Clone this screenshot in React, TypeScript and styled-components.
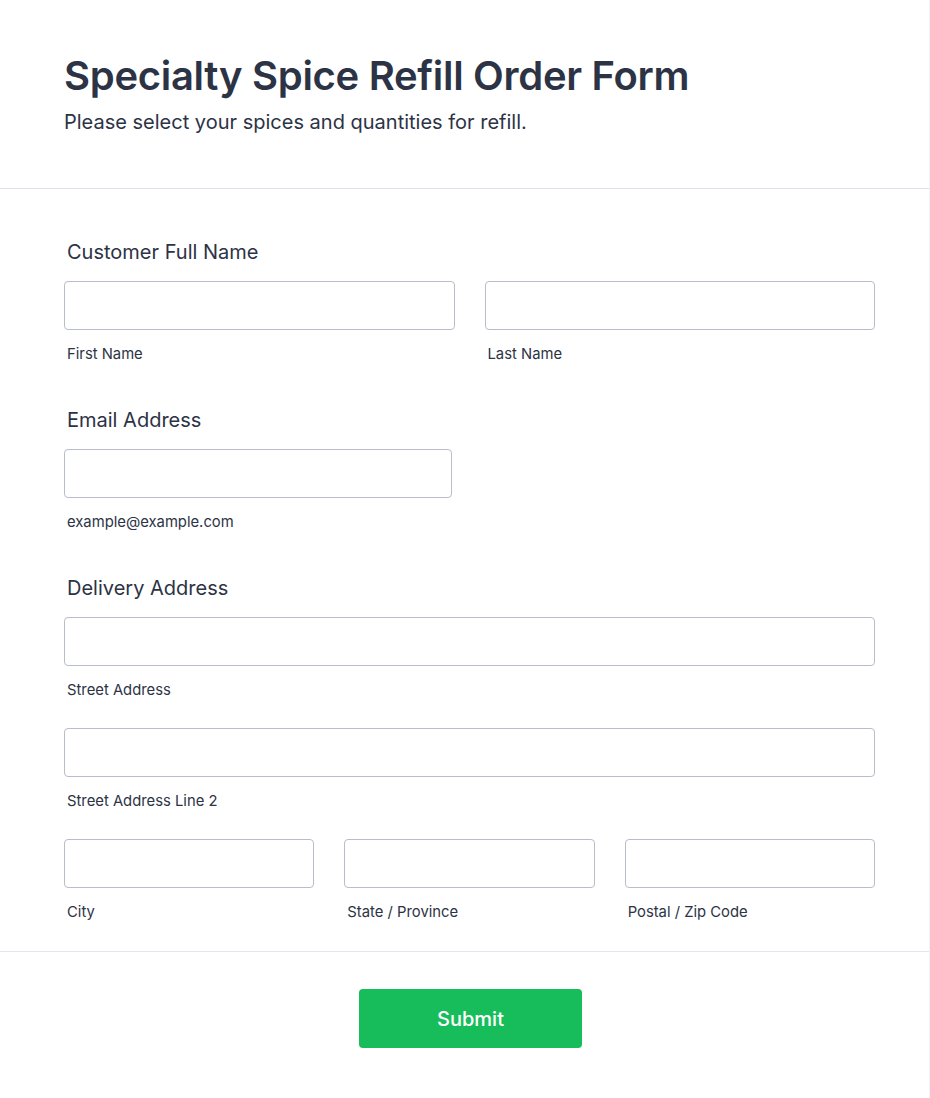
import React from "react";
import styled, { createGlobalStyle } from "styled-components";

const Global = createGlobalStyle`
  html, body { margin: 0; padding: 0; background: #ffffff; }
  body { font-family: Inter, "Noto Sans", sans-serif; color: #2c3345; }
  * { box-sizing: border-box; }
`;

const Card = styled.div`
  width: 930px;
  min-height: 1098px;
  background: #ffffff;
  border-right: 1px solid #f1f2f8;
  display: flex;
  flex-direction: column;
`;

const Header = styled.header`
  height: 189px;
  padding: 52px 64px 0;
  border-bottom: 1px solid #dde2ea;
`;

const Title = styled.h1`
  margin: 0;
  font-size: 40px;
  line-height: 48px;
  font-weight: 600;
  letter-spacing: -0.3px;
  color: #2c3345;
`;

const Subtitle = styled.p`
  margin: 10px 0 0;
  font-size: 20px;
  line-height: 24px;
  font-weight: 400;
  color: #2c3345;
`;

const FormBody = styled.div`
  padding: 51px 54px 30px 64px;
  border-bottom: 1px solid #e3e6ee;
  display: flex;
  flex-direction: column;
  gap: 45px;
`;

const Group = styled.section`
  display: flex;
  flex-direction: column;
`;

const GroupLabel = styled.label`
  display: block;
  margin: 0 0 18px 3px;
  padding-top: 1px;
  font-size: 20px;
  line-height: 22px;
  font-weight: 400;
  color: #2c3345;
`;

const Rows = styled.div`
  display: flex;
  flex-direction: column;
  gap: 29px;
`;

const Row = styled.div<{ $cols: number; $width?: number }>`
  display: grid;
  grid-template-columns: repeat(${(p) => p.$cols}, 1fr);
  column-gap: 30px;
  width: ${(p) => (p.$width ? `${p.$width}px` : "100%")};
`;

const Field = styled.div`
  display: flex;
  flex-direction: column;
`;

const Input = styled.input`
  height: 49px;
  width: 100%;
  border: 1px solid #b8bdc9;
  border-radius: 4px;
  background: #ffffff;
  padding: 0 12px;
  font-family: Inter, sans-serif;
  font-size: 16px;
  color: #2c3345;
  outline: none;
`;

const SubLabel = styled.span`
  margin: 15px 0 0 3px;
  font-size: 14.8px;
  line-height: 18px;
  color: #2c3345;
`;

const Footer = styled.div`
  display: flex;
  justify-content: center;
  padding: 37px 0 50px 12px;
`;

const SubmitButton = styled.button`
  width: 223px;
  height: 59px;
  border: none;
  border-radius: 4px;
  background: #18bd5b;
  color: #ffffff;
  font-family: Inter, sans-serif;
  font-size: 20px;
  font-weight: 500;
  cursor: pointer;
`;

type F = { sub: string };

const FieldBox = ({ sub }: F) => (
  <Field>
    <Input type="text" aria-label={sub} />
    <SubLabel>{sub}</SubLabel>
  </Field>
);

export default function App() {
  return (
    <>
      <Global />
      <Card>
        <Header>
          <Title>Specialty Spice Refill Order Form</Title>
          <Subtitle>Please select your spices and quantities for refill.</Subtitle>
        </Header>
        <FormBody>
          <Group>
            <GroupLabel>Customer Full Name</GroupLabel>
            <Row $cols={2}>
              <FieldBox sub="First Name" />
              <FieldBox sub="Last Name" />
            </Row>
          </Group>
          <Group>
            <GroupLabel>Email Address</GroupLabel>
            <Row $cols={1} $width={388}>
              <FieldBox sub="example@example.com" />
            </Row>
          </Group>
          <Group>
            <GroupLabel>Delivery Address</GroupLabel>
            <Rows>
              <Row $cols={1}>
                <FieldBox sub="Street Address" />
              </Row>
              <Row $cols={1}>
                <FieldBox sub="Street Address Line 2" />
              </Row>
              <Row $cols={3}>
                <FieldBox sub="City" />
                <FieldBox sub="State / Province" />
                <FieldBox sub="Postal / Zip Code" />
              </Row>
            </Rows>
          </Group>
        </FormBody>
        <Footer>
          <SubmitButton type="button">Submit</SubmitButton>
        </Footer>
      </Card>
    </>
  );
}
